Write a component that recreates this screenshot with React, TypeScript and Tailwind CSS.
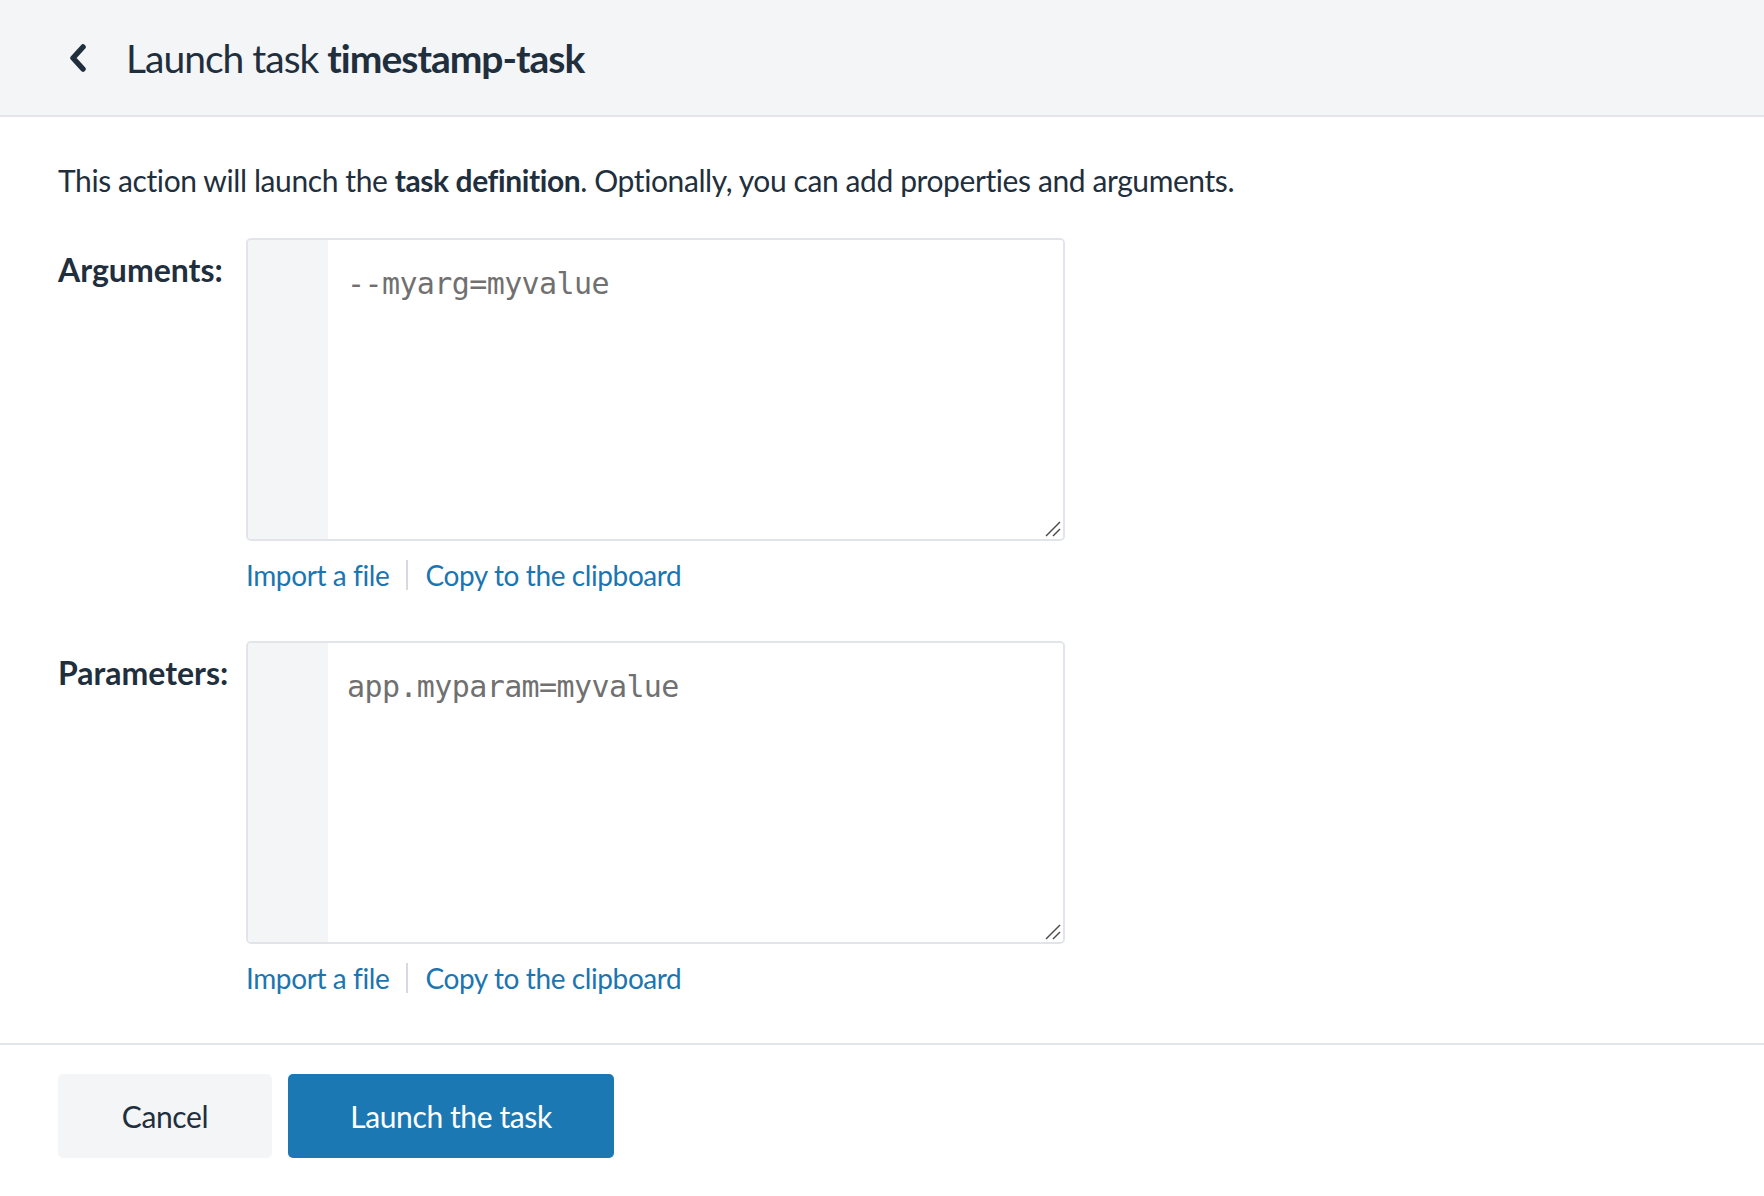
import React from "react";

const FONT = { fontFamily: "Lato, 'Noto Sans', sans-serif" } as React.CSSProperties;

function Field({ label, placeholder }: { label: string; placeholder: string }) {
  return (
    <div className="flex">
      <div className="w-[188px] shrink-0 pt-[12px] text-[32px] leading-[40px] font-bold text-[#1f2f3d]">{label}</div>
      <div className="flex flex-col">
        <div className="relative flex w-[819px] h-[303px] border-2 border-[#e1e5ea] rounded-[5px] overflow-hidden bg-white">
          <div className="w-[80px] shrink-0 bg-[#f4f5f7]" />
          <textarea
            className="flex-1 resize-none pl-[19px] pt-[24px] text-[30px] leading-[40px] tracking-[-0.6px] text-[#333] placeholder:text-[#707070] outline-none bg-white"
            style={{ fontFamily: "'DejaVu Sans Mono', monospace" }}
            placeholder={placeholder}
          />
          <svg width="18" height="18" viewBox="0 0 18 18" className="absolute right-[1px] bottom-[1px] pointer-events-none">
            <line x1="2" y1="16" x2="16" y2="2" stroke="#4a4a4a" strokeWidth="1.5" />
            <line x1="9" y1="16" x2="16" y2="9" stroke="#4a4a4a" strokeWidth="1.5" />
          </svg>
        </div>
        <div className="flex items-center mt-[16px] h-[36px] text-[28px] tracking-[-0.4px] text-[#1b75b0]">
          <span>Import a file</span>
          <span className="mx-[17px] w-[2px] h-[30px] bg-[#d6d9dd]" />
          <span>Copy to the clipboard</span>
        </div>
      </div>
    </div>
  );
}

export default function App() {
  return (
    <div className="w-[1764px] h-[1196px] bg-white flex flex-col text-[#1f2f3d]" style={FONT}>
      <div className="h-[117px] shrink-0 bg-[#f4f5f7] border-b-2 border-[#e2e5e9] flex items-center pl-[68px]">
        <svg width="20" height="28" viewBox="0 0 20 28" className="mr-[38px]">
          <polyline points="15,3 5,14 15,25" fill="none" stroke="#1f2f3d" strokeWidth="5.5" strokeLinecap="round" strokeLinejoin="round" />
        </svg>
        <div className="text-[39px] leading-[48px] tracking-[-1px]">
          Launch task <span className="font-bold">timestamp-task</span>
        </div>
      </div>
      <div className="flex-1 px-[58px] pt-[43px]">
        <div className="text-[30px] leading-[40px] tracking-[-0.4px]">
          This action will launch the <span className="font-bold">task definition</span>. Optionally, you can add properties and arguments.
        </div>
        <div className="mt-[38px] flex flex-col gap-[48px]">
          <Field label="Arguments:" placeholder="--myarg=myvalue" />
          <Field label="Parameters:" placeholder="app.myparam=myvalue" />
        </div>
      </div>
      <div className="h-[153px] shrink-0 border-t-2 border-[#e2e5e9] px-[58px] pt-[29px] flex gap-[16px] items-start">
        <button className="w-[214px] h-[84px] rounded-[5px] bg-[#f4f5f7] text-[30px] tracking-[-0.4px] text-[#1f2f3d]">Cancel</button>
        <button className="w-[326px] h-[84px] rounded-[5px] bg-[#1c78b2] text-[30px] tracking-[-0.4px] text-white">Launch the task</button>
      </div>
    </div>
  );
}
